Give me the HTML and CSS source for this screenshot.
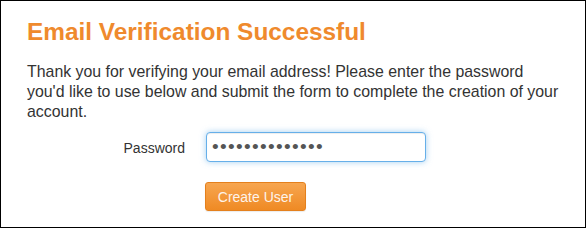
FILE: index.html
```html
<!DOCTYPE html>
<html>
<head>
<meta charset="utf-8">
<link rel="stylesheet" href="styles.css">
</head>
<body>
<div class="frame">
  <h1 class="title">Email Verification Successful</h1>
  <p class="intro">Thank you for verifying your email address! Please enter the password<br>you'd like to use below and submit the form to complete the creation of your<br>account.</p>
  <form class="form">
    <label class="label" for="pw">Password</label>
    <input class="input" id="pw" type="password" value="abcdefghijklmn">
    <div class="actions">
      <button class="btn" type="button">Create User</button>
    </div>
  </form>
</div>
</body>
</html>
```
FILE: styles.css
```css
html, body {
  margin: 0;
  padding: 0;
  background: #fff;
}
.frame {
  box-sizing: border-box;
  width: 586px;
  height: 228px;
  border: 1px solid #000;
  padding: 17px 10px 0 26px;
  font-family: "Liberation Sans", Arial, sans-serif;
  color: #333;
}
.title {
  margin: 0;
  font-size: 24.4px;
  line-height: 28px;
  font-weight: bold;
  color: #ef8a2d;
}
.intro {
  margin: 16px 0 0 0;
  font-size: 15.9px;
  line-height: 20px;
  white-space: nowrap;
}
.form {
  display: grid;
  grid-template-columns: 158px 220px;
  column-gap: 21px;
  row-gap: 20px;
  margin-top: 10px;
  align-items: center;
}
.label {
  text-align: right;
  font-size: 14px;
  color: #333;
  padding-top: 1px;
}
.input {
  box-sizing: border-box;
  width: 220px;
  height: 30px;
  margin: 0;
  padding: 0 5px;
  border: 1px solid #66afe9;
  border-radius: 4px;
  box-shadow: inset 0 1px 1px rgba(0,0,0,.075), 0 0 6px rgba(102,175,233,.6);
  font-family: "Liberation Sans", Arial, sans-serif;
  font-size: 19px;
  letter-spacing: 1.35px;
  color: #555;
  outline: none;
}
.actions {
  grid-column: 2;
}
.btn {
  box-sizing: border-box;
  width: 101px;
  height: 29px;
  margin: 0 0 0 -1px;
  padding: 0;
  border: 1px solid #e4801d;
  border-radius: 3px;
  background: linear-gradient(to bottom, #f7a650 0%, #ef8a24 100%);
  color: #fdf3ea;
  font-family: "Liberation Sans", Arial, sans-serif;
  font-size: 14px;
  box-shadow: 0 1px 1px rgba(0,0,0,.08);
}
```
